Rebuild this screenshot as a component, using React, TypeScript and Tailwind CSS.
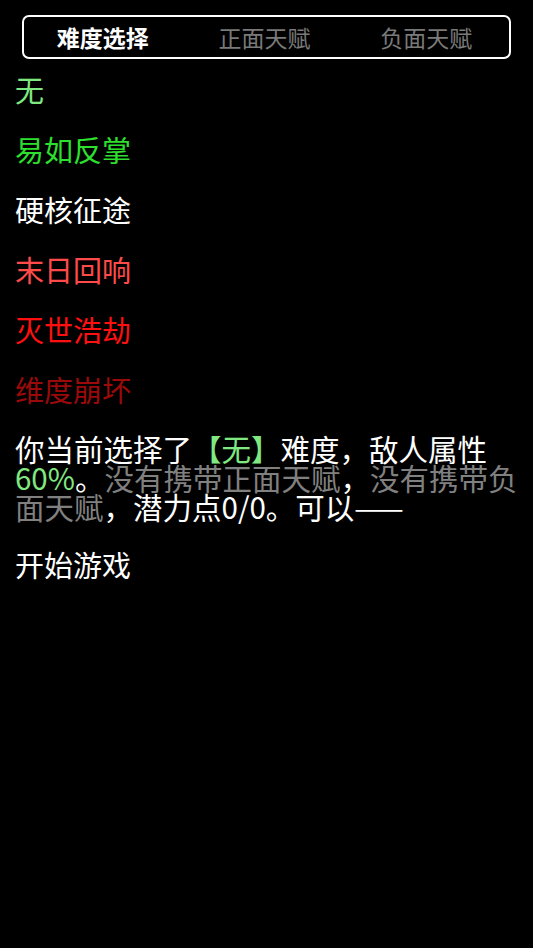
const FONT = "font-['Noto_Sans_CJK_SC','Noto_Sans',sans-serif]";

const levels = [
  { name: '无', color: 'text-[#80e880]' },
  { name: '易如反掌', color: 'text-[#2ee02e]' },
  { name: '硬核征途', color: 'text-white' },
  { name: '末日回响', color: 'text-[#ff4a4a]' },
  { name: '灭世浩劫', color: 'text-[#ff1010]' },
  { name: '维度崩坏', color: 'text-[#9a0a0a]' },
];

const tabs = ['难度选择', '正面天赋', '负面天赋'];

export default function App() {
  return (
    <div className={`min-h-screen bg-black text-white ${FONT}`}>
      <div className="px-[22px] pt-[15px]">
        <nav className="grid grid-cols-3 h-[44px] items-center rounded-[7px] border-2 border-white">
          {tabs.map((t, i) => (
            <button
              key={t}
              type="button"
              className={`pr-[4px] text-center text-[23px] leading-none ${
                i === 0 ? 'font-bold text-white' : 'text-[#7a7a7a]'
              }`}
            >
              {t}
            </button>
          ))}
        </nav>
      </div>
      <ul className="px-[15px] pt-[1px]">
        {levels.map((l) => (
          <li key={l.name} className={`flex h-[60px] items-center text-[29px] ${l.color}`}>
            {l.name}
          </li>
        ))}
      </ul>
      <p className="mt-[14px] pl-[15px] pr-[12px] text-[29.5px] leading-[29px]">
        你当前选择了<span className="text-[#80e880]">【无】</span>难度，敌人属性
        <span className="text-[#80e880]">60%</span>。
        <span className="text-[#808080]">没有携带正面天赋</span>，
        <span className="text-[#808080]">没有携带负面天赋</span>，潜力点0/0。可以——
      </p>
      <button type="button" className="flex h-[60px] items-center px-[15px] mt-[14px] text-[29px]">
        开始游戏
      </button>
    </div>
  );
}
